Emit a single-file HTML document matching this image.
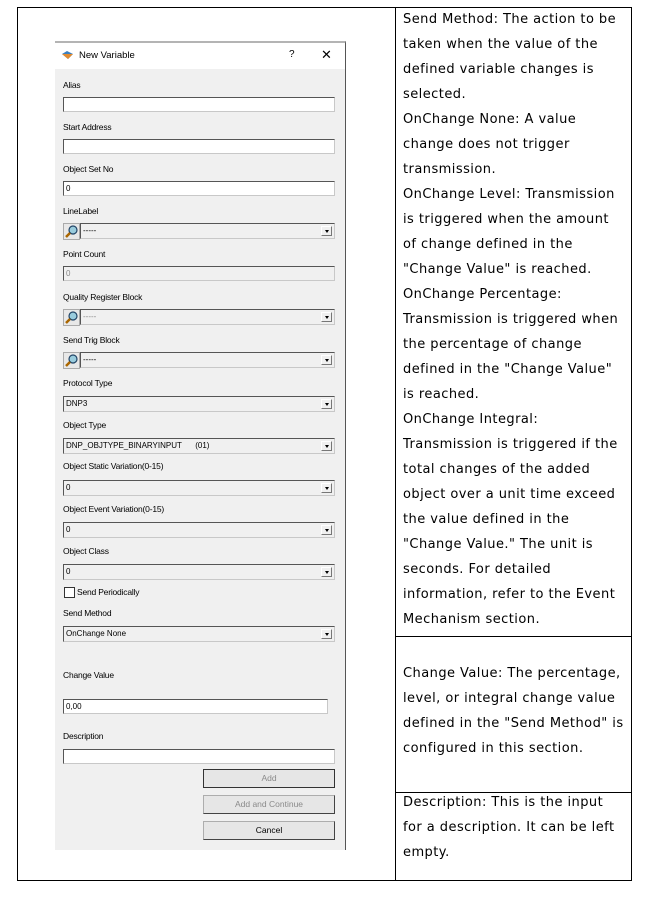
<!DOCTYPE html>
<html><head><meta charset="utf-8"><style>
body{margin:0;width:645px;height:905px;background:#fff;position:relative;overflow:hidden;font-family:"Liberation Sans",sans-serif}
.a{position:absolute}
.ln{position:absolute;background:#000}
.dlg{position:absolute;left:55px;top:41px;width:291px;height:809px;background:#f0f0f0;border-top:2px solid #b4b4b4;border-right:1px solid #555;box-sizing:border-box}
.tb{position:absolute;left:0;top:0;width:290px;height:26px;background:#fff}
.lb{position:absolute;left:8px;font-size:8.5px;color:#000;letter-spacing:-0.2px}
.bx{position:absolute;left:8px;width:272px;height:15px;background:#fff;border:1px solid #c8c8c8;border-top-color:#555;border-left-color:#555;box-sizing:border-box;font-size:8px;line-height:13px;padding-left:2px}
.cb{position:absolute;left:8px;width:272px;height:16px;background:#f0f0f0;border:1px solid #c8c8c8;border-top-color:#555;border-left-color:#555;box-sizing:border-box;font-size:8px;line-height:14px;padding-left:2px}
.cb:after{content:"";position:absolute;right:2px;top:2px;width:11px;height:10px;background:#f0f0f0;border:1px solid #777;border-left-color:#fff;border-top-color:#fff;box-sizing:border-box}
.cb i{position:absolute;right:5px;top:6px;border:2.5px solid transparent;border-top:3px solid #000;z-index:2}
.sr{position:absolute;left:8px;width:17px;height:17px;border:1px solid #aaa;background:#e8e8e8;box-sizing:border-box}
.btn{position:absolute;left:148px;width:132px;height:19px;background:#e6e6e6;border:1px solid #adadad;border-right-color:#444;border-bottom-color:#444;box-sizing:border-box;font-size:8.5px;text-align:center;line-height:17px;color:#8a8a8a}
.tx{position:absolute;left:403px;font-family:"DejaVu Sans",Verdana,sans-serif;font-size:13px;line-height:25px;white-space:nowrap;color:#000;letter-spacing:0.45px}
</style></head><body>
<div class="ln" style="left:17px;top:7px;width:615px;height:1px"></div>
<div class="ln" style="left:17px;top:880px;width:615px;height:1px"></div>
<div class="ln" style="left:17px;top:7px;width:1px;height:874px"></div>
<div class="ln" style="left:395px;top:7px;width:1px;height:874px"></div>
<div class="ln" style="left:631px;top:7px;width:1px;height:874px"></div>
<div class="ln" style="left:395px;top:636px;width:237px;height:1px"></div>
<div class="ln" style="left:395px;top:792px;width:237px;height:1px"></div>

<div class="tx" style="top:7px">Send Method: The action to be<br>taken when the value of the<br>defined variable changes is<br>selected.<br>OnChange None: A value<br>change does not trigger<br>transmission.<br>OnChange Level: Transmission<br>is triggered when the amount<br>of change defined in the<br>"Change Value" is reached.<br>OnChange Percentage:<br>Transmission is triggered when<br>the percentage of change<br>defined in the "Change Value"<br>is reached.<br>OnChange Integral:<br>Transmission is triggered if the<br>total changes of the added<br>object over a unit time exceed<br>the value defined in the<br>"Change Value." The unit is<br>seconds. For detailed<br>information, refer to the Event<br>Mechanism section.</div>
<div class="tx" style="top:661px">Change Value: The percentage,<br>level, or integral change value<br>defined in the "Send Method" is<br>configured in this section.</div>
<div class="tx" style="top:790px">Description: This is the input<br>for a description. It can be left<br>empty.</div>

<div class="dlg">
<div class="tb">
<svg class="a" style="left:7px;top:8px" width="11" height="8"><path d="M0 3 L5 0 L11 3 L6 8 Z" fill="#3a7fc0"/><path d="M0 3 L6 8 L11 3" fill="#e08a30"/></svg>
<div class="a" style="left:24px;top:7px;font-size:9.5px">New Variable</div>
<div class="a" style="left:234px;top:6px;font-size:10px">?</div>
<div class="a" style="left:266px;top:4px;font-size:13px;font-weight:300">✕</div>
</div>
</div>
<div class="a" style="left:55px;top:43px;width:291px;height:807px">
<div class="lb" style="top:37px">Alias</div><div class="bx" style="top:54px"></div>
<div class="lb" style="top:79px">Start Address</div><div class="bx" style="top:96px"></div>
<div class="lb" style="top:121px">Object Set No</div><div class="bx" style="top:138px">0</div>
<div class="lb" style="top:163px">LineLabel</div>
<div class="sr" style="top:180px"><svg width="15" height="15"><circle cx="9" cy="6" r="4" fill="#9cd" stroke="#246" stroke-width="1.2"/><path d="M6 9 L2 13" stroke="#a60" stroke-width="2.5"/></svg></div>
<div class="cb" style="top:180px;left:25px;width:255px;background:#f0f0f0">-----<i></i></div>
<div class="lb" style="top:206px">Point Count</div><div class="bx" style="top:223px;background:#f0f0f0;color:#888">0</div>
<div class="lb" style="top:249px">Quality Register Block</div>
<div class="sr" style="top:266px"><svg width="15" height="15"><circle cx="9" cy="6" r="4" fill="#9cd" stroke="#246" stroke-width="1.2"/><path d="M6 9 L2 13" stroke="#a60" stroke-width="2.5"/></svg></div>
<div class="cb" style="top:266px;left:25px;width:255px;color:#888">-----<i></i></div>
<div class="lb" style="top:292px">Send Trig Block</div>
<div class="sr" style="top:309px"><svg width="15" height="15"><circle cx="9" cy="6" r="4" fill="#9cd" stroke="#246" stroke-width="1.2"/><path d="M6 9 L2 13" stroke="#a60" stroke-width="2.5"/></svg></div>
<div class="cb" style="top:309px;left:25px;width:255px">-----<i></i></div>
<div class="lb" style="top:335px">Protocol Type</div><div class="cb" style="top:353px">DNP3<i></i></div>
<div class="lb" style="top:377px">Object Type</div><div class="cb" style="top:395px">DNP_OBJTYPE_BINARYINPUT&nbsp;&nbsp;&nbsp;&nbsp;&nbsp;&nbsp;(01)<i></i></div>
<div class="lb" style="top:418px">Object Static Variation(0-15)</div><div class="cb" style="top:437px">0<i></i></div>
<div class="lb" style="top:461px">Object Event Variation(0-15)</div><div class="cb" style="top:479px">0<i></i></div>
<div class="lb" style="top:503px">Object Class</div><div class="cb" style="top:521px">0<i></i></div>
<div class="a" style="left:9px;top:544px;width:9px;height:9px;border:1px solid #333;background:#fff"></div>
<div class="lb" style="top:544px;left:22px">Send Periodically</div>
<div class="lb" style="top:565px">Send Method</div><div class="cb" style="top:583px">OnChange None<i></i></div>
<div class="lb" style="top:627px">Change Value</div><div class="bx" style="top:656px;width:265px">0,00</div>
<div class="lb" style="top:688px">Description</div><div class="bx" style="top:706px"></div>
<div class="btn" style="top:726px;border:1px solid #333">Add</div>
<div class="btn" style="top:752px">Add and Continue</div>
<div class="btn" style="top:778px;color:#000">Cancel</div>
</div>
</body></html>
